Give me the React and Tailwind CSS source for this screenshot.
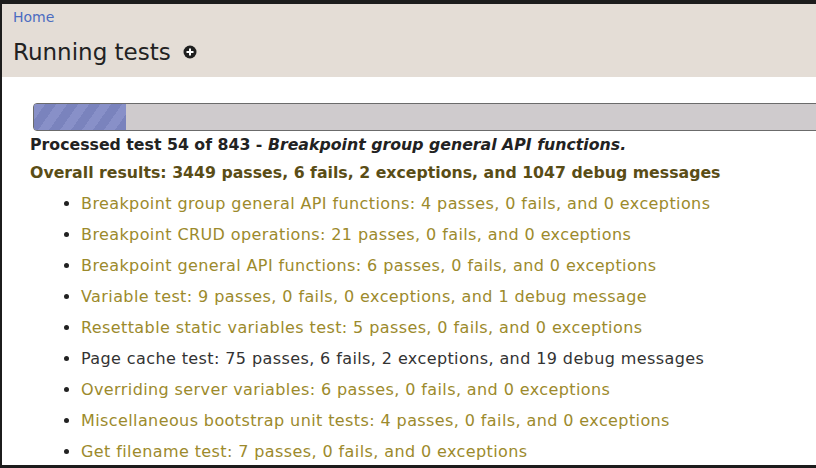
import React from "react";

const RESULTADOS = [
  { texto: "Breakpoint group general API functions: 4 passes, 0 fails, and 0 exceptions", ok: true },
  { texto: "Breakpoint CRUD operations: 21 passes, 0 fails, and 0 exceptions", ok: true },
  { texto: "Breakpoint general API functions: 6 passes, 0 fails, and 0 exceptions", ok: true },
  { texto: "Variable test: 9 passes, 0 fails, 0 exceptions, and 1 debug message", ok: true },
  { texto: "Resettable static variables test: 5 passes, 0 fails, and 0 exceptions", ok: true },
  { texto: "Page cache test: 75 passes, 6 fails, 2 exceptions, and 19 debug messages", ok: false },
  { texto: "Overriding server variables: 6 passes, 0 fails, and 0 exceptions", ok: true },
  { texto: "Miscellaneous bootstrap unit tests: 4 passes, 0 fails, and 0 exceptions", ok: true },
  { texto: "Get filename test: 7 passes, 0 fails, and 0 exceptions", ok: true },
];

function PlusCircle() {
  return (
    <svg width="14" height="14" viewBox="0 0 14 14" aria-hidden="true">
      <circle cx="7" cy="7" r="6.5" fill="#1f1f1f" />
      <rect x="3.5" y="6" width="7" height="2" fill="#fff" />
      <rect x="6" y="3.5" width="2" height="7" fill="#fff" />
    </svg>
  );
}

export default function App() {
  return (
    <div className="h-[468px] w-[816px] overflow-hidden bg-[#1c1c1c] pl-[2px] pt-[4px] pb-[3px] font-['DejaVu_Sans',sans-serif]">
      <div className="h-full overflow-hidden bg-white">
        <header className="h-[73px] bg-[#e4ddd6] px-[11px] pt-[4px]">
          <a href="#" className="block text-[14px] leading-[18px] text-[#4b6cc1]">
            Home
          </a>
          <h1 className="mt-[11px] flex items-center gap-[12px] text-[23px] leading-[30px] text-[#222]">
            Running tests
            <PlusCircle />
          </h1>
        </header>

        <main className="pl-[28px] pt-[26px]">
          <div className="ml-[3px] flex h-[28px] w-[800px] overflow-hidden rounded-l-[4px] border border-[#6b6b6b] bg-[#cfcbcd]">
            <div className="h-full w-[92px] bg-[#7a83bd] bg-[repeating-linear-gradient(-55deg,#7a83bd_0px,#7a83bd_9px,#8890c8_9px,#8890c8_18px)]" />
          </div>

          <p className="text-[15.75px] font-bold leading-[28px] text-[#222]">
            Processed test 54 of 843 - <em>Breakpoint group general API functions.</em>
          </p>
          <p className="text-[15.75px] font-bold leading-[28px] text-[#5a4d16]">
            Overall results: 3449 passes, 6 fails, 2 exceptions, and 1047 debug messages
          </p>

          <ul className="mt-[1px] list-disc pl-[51px] marker:text-[#222]">
            {RESULTADOS.map((r) => (
              <li
                key={r.texto}
                className={
                  "text-[16px] leading-[31px] tracking-[0.4px] " +
                  (r.ok ? "text-[#9c8a2c]" : "text-[#333]")
                }
              >
                {r.texto}
              </li>
            ))}
          </ul>
        </main>
      </div>
    </div>
  );
}
